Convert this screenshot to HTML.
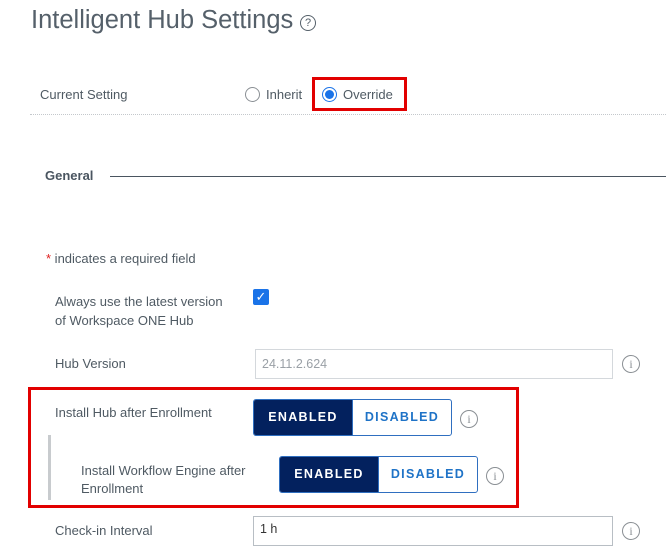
<!DOCTYPE html>
<html><head><style>
body{margin:0;width:666px;height:530px;overflow:hidden;background:#fff;font-family:"Liberation Sans",sans-serif;color:#4a5560;position:relative}
.a{position:absolute;white-space:nowrap}
.t{font-size:13px;color:#4f5a63}
.radio{position:absolute;width:13px;height:13px;border:1px solid #8a8f94;border-radius:50%;background:#fff}
.info{position:absolute;width:16px;height:16px;border:1px solid #8a8f94;border-radius:50%;font-size:12px;line-height:16px;text-align:center;color:#8a8f94;font-family:"Liberation Serif",serif}
.tog{position:absolute;width:197px;height:35px;border:1px solid #2f6fc0;border-radius:3px;overflow:hidden;display:flex;font-size:12.5px;font-weight:bold;letter-spacing:1.3px}
.tog .e{width:98px;background:#03215e;color:#fff;text-align:center;line-height:35px}
.tog .d{flex:1;color:#1f73c7;text-align:center;line-height:35px;border-left:1px solid #2f6fc0}
.inp{position:absolute;border:1px solid #d4d8dc;background:#fff;box-sizing:border-box}
.red{position:absolute;border:3px solid #e20000;box-sizing:border-box}
</style></head><body>
<div class="a" style="left:31px;top:6px;font-size:25.5px;color:#55606a;">Intelligent Hub Settings</div>
<div class="a" style="left:300px;top:15px;width:14px;height:14px;border:1.3px solid #55606a;border-radius:50%;font-size:11px;line-height:14px;text-align:center;color:#55606a">?</div>

<div class="a t" style="left:40px;top:87px">Current Setting</div>
<div class="radio" style="left:245px;top:87px"></div>
<div class="a t" style="left:266px;top:87px">Inherit</div>
<div class="radio" style="left:322px;top:87px;border-color:#1a73e8"><div style="position:absolute;left:2px;top:2px;width:9px;height:9px;border-radius:50%;background:#1a73e8"></div></div>
<div class="a t" style="left:343px;top:87px">Override</div>
<div class="red" style="left:312px;top:77px;width:95px;height:34px"></div>
<div class="a" style="left:30px;top:114px;width:636px;border-top:1px dotted #c4c8cc"></div>

<div class="a" style="left:45px;top:168px;font-size:13px;font-weight:bold;color:#4a5560">General</div>
<div class="a" style="left:110px;top:176px;width:556px;height:1px;background:#4a5560"></div>

<div class="a t" style="left:46px;top:251px"><span style="color:#e02020">*</span> indicates a required field</div>

<div class="a t" style="left:55px;top:292px;line-height:19px">Always use the latest version<br>of Workspace ONE Hub</div>
<div class="a" style="left:253px;top:289px;width:16px;height:16px;background:#1a73e8;border-radius:2px;color:#fff;font-size:13px;line-height:16px;text-align:center">✓</div>

<div class="a t" style="left:55px;top:356px">Hub Version</div>
<div class="inp" style="left:255px;top:349px;width:358px;height:30px"><span style="position:absolute;left:6px;top:7px;font-size:12.5px;color:#9aa0a6">24.11.2.624</span></div>
<div class="info" style="left:622px;top:355px">i</div>

<div class="red" style="left:28px;top:387px;width:491px;height:121px"></div>
<div class="a t" style="left:55px;top:405px">Install Hub after Enrollment</div>
<div class="tog" style="left:253px;top:399px"><div class="e">ENABLED</div><div class="d">DISABLED</div></div>
<div class="info" style="left:460px;top:410px">i</div>

<div class="a" style="left:48px;top:435px;width:3px;height:65px;background:#c8cbce"></div>
<div class="a t" style="left:81px;top:462px;line-height:18px">Install Workflow Engine after<br>Enrollment</div>
<div class="tog" style="left:279px;top:456px"><div class="e">ENABLED</div><div class="d">DISABLED</div></div>
<div class="info" style="left:486px;top:467px">i</div>

<div class="a t" style="left:55px;top:523px">Check-in Interval</div>
<div class="inp" style="left:253px;top:516px;width:360px;height:30px;border-color:#b8bec4"><span style="position:absolute;left:6px;top:5px;font-size:12.5px;color:#333">1 h</span></div>
<div class="info" style="left:622px;top:522px">i</div>
</body></html>
